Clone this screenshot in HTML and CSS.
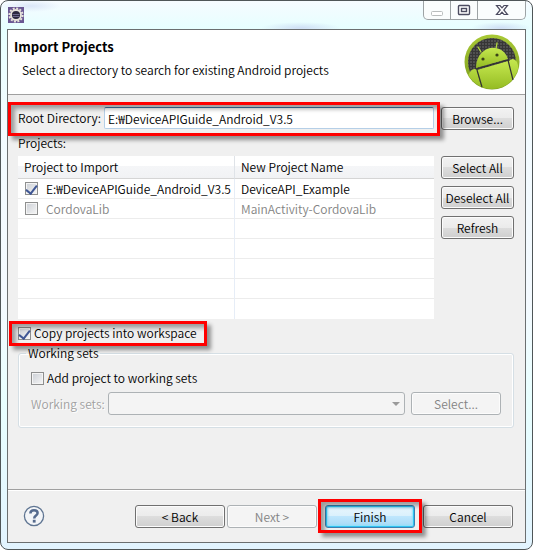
FILE: index.html
```html
<!DOCTYPE html>
<html lang="en">
<head>
    <meta charset="UTF-8">
    <meta name="viewport" content="width=device-width, initial-scale=1.0">
    <title>Import Projects</title>
    <link rel="stylesheet" href="styles.css">
</head>
<body>
    <div class="window">
        <div class="titlebar">
            <svg class="app-icon" viewBox="0 0 16 16" width="16" height="16">
                <rect width="16" height="16" fill="#6a5793"/>
                <circle cx="8" cy="8" r="6.6" fill="none" stroke="#e8e4dc" stroke-width="2" stroke-dasharray="2 1.45"/>
                <circle cx="8" cy="8" r="5" fill="#2c2840" stroke="#e8e4dc" stroke-width="1.8"/>
                <path d="M4.5 7.5h7M4.5 9.5h7" stroke="#6d688c" stroke-width="1"/>
            </svg>
            <div class="controls">
                <button class="control" aria-label="Minimize">
                    <svg viewBox="0 0 14 12" width="14" height="12"><rect x="1.5" y="7.5" width="11" height="4" rx="1" fill="#fff" stroke="#b9bdbd"/></svg>
                </button>
                <button class="control" aria-label="Maximize">
                    <svg viewBox="0 0 14 12" width="14" height="12">
                        <rect x="1.5" y="1.5" width="11" height="9" rx="1" fill="#fff" stroke="#4c4c60" stroke-width="1.4"/>
                        <rect x="4.5" y="4.5" width="5" height="3" fill="#fff" stroke="#4c4c60" stroke-width="1.4"/>
                    </svg>
                </button>
                <button class="control close" aria-label="Close">
                    <svg viewBox="0 0 14 12" width="14" height="12"><path d="M1.5 1.5h3.5l2 2.3 2-2.3h3.5l-3.7 4.5 3.7 4.5h-3.5l-2-2.3-2 2.3H1.5l3.7-4.5z" fill="#fff" stroke="#4c4c60" stroke-width="1.2"/></svg>
                </button>
            </div>
        </div>

        <form class="dialog">
            <div class="header">
                <div>
                    <h1>Import Projects</h1>
                    <p>Select a directory to search for existing Android projects</p>
                </div>
                <svg class="logo" viewBox="0 0 56 56" width="56" height="56">
                    <defs>
                        <linearGradient id="ring" x1="0" y1="0" x2="0" y2="1">
                            <stop offset="0" stop-color="#a9c936"/>
                            <stop offset="1" stop-color="#7a9c1c"/>
                        </linearGradient>
                        <linearGradient id="robot" x1="0" y1="0" x2="0" y2="1">
                            <stop offset="0" stop-color="#c5e84f"/>
                            <stop offset="1" stop-color="#94bb22"/>
                        </linearGradient>
                        <pattern id="mesh" width="3" height="3" patternUnits="userSpaceOnUse">
                            <rect width="3" height="3" fill="#363636"/>
                            <rect width="2" height="2" fill="#505050"/>
                        </pattern>
                        <clipPath id="disc"><circle cx="28" cy="28" r="27"/></clipPath>
                    </defs>
                    <circle cx="28" cy="28" r="27.5" fill="url(#ring)"/>
                    <circle cx="28" cy="28" r="24" fill="url(#mesh)"/>
                    <g clip-path="url(#disc)">
                        <path d="M6 38Q9 33 13 36L18 56H12Q5 50 3 43zM44 28Q49 22 53 28L56 38 49 47z" fill="url(#robot)"/>
                        <path d="M12 34C12 11 38 7 44 25z" fill="url(#robot)"/>
                        <path d="M13 36L44 27 50 48Q40 59 18 54z" fill="url(#robot)"/>
                    </g>
                    <path d="M17 18L14 13M32 15L33 9" stroke="#b5da40" stroke-width="1.3" stroke-linecap="round"/>
                    <path d="M12 35L44 26M13 36L18 53M44 26L49 46" stroke="#333" stroke-width="1.2" fill="none"/>
                    <circle cx="19" cy="25" r="1.6" fill="#3a4316"/>
                    <circle cx="33" cy="21" r="1.6" fill="#3a4316"/>
                </svg>
            </div>

            <div class="content">
                <div class="columns root-row">
                    <div class="root-field marked">
                        <label for="root">Root Directory:</label>
                        <input type="text" id="root" value="E:₩DeviceAPIGuide_Android_V3.5">
                    </div>
                    <button type="button" class="btn">Browse...</button>
                </div>

                <div class="caption">Projects:</div>
                <div class="columns">
                    <table>
                        <thead>
                            <tr><th>Project to Import</th><th>New Project Name</th></tr>
                        </thead>
                        <tbody>
                            <tr>
                                <td><label class="check"><input type="checkbox" checked>E:₩DeviceAPIGuide_Android_V3.5</label></td>
                                <td>DeviceAPI_Example</td>
                            </tr>
                            <tr class="muted">
                                <td><label class="check"><input type="checkbox">CordovaLib</label></td>
                                <td>MainActivity-CordovaLib</td>
                            </tr>
                            <tr><td></td><td></td></tr>
                            <tr><td></td><td></td></tr>
                            <tr><td></td><td></td></tr>
                            <tr><td></td><td></td></tr>
                            <tr><td></td><td></td></tr>
                        </tbody>
                    </table>
                    <div class="side-buttons">
                        <button type="button" class="btn">Select All</button>
                        <button type="button" class="btn">Deselect All</button>
                        <button type="button" class="btn">Refresh</button>
                    </div>
                </div>

                <div class="copy-row marked">
                    <label class="check"><input type="checkbox" checked>Copy projects into workspace</label>
                </div>

                <fieldset>
                    <legend>Working sets</legend>
                    <label class="check"><input type="checkbox">Add project to working sets</label>
                    <div class="sets-row">
                        <label for="sets">Working sets:</label>
                        <div class="select-box">
                            <select id="sets" disabled></select>
                        </div>
                        <button type="button" class="btn wide" disabled>Select...</button>
                    </div>
                </fieldset>
            </div>

            <div class="footer">
                <button type="button" class="help" aria-label="Help">
                    <svg viewBox="0 0 22 22" width="22" height="22">
                        <circle cx="11" cy="11" r="9.6" fill="#f3f5f8" stroke="#5f7592" stroke-width="1.3"/>
                        <path d="M7.4 8.6Q7.4 5.2 11 5.2T14.6 8.1C14.6 10.6 11.2 10.4 11.2 13.4" fill="none" stroke="#566b8e" stroke-width="2.5"/>
                        <rect x="9.8" y="14.8" width="2.8" height="2.8" fill="#566b8e"/>
                    </svg>
                </button>
                <div class="nav">
                    <button type="button" class="btn wide">&lt; Back</button>
                    <button type="button" class="btn wide" disabled>Next &gt;</button>
                </div>
                <div class="finish marked">
                    <button type="submit" class="btn wide primary">Finish</button>
                </div>
                <button type="button" class="btn wide">Cancel</button>
            </div>
        </form>
    </div>
</body>
</html>
```
FILE: styles.css
```css
* {
    box-sizing: border-box;
}
body {
    margin: 0;
    background-color: #fff;
    color: #000;
    font-family: "Noto Sans CJK KR", "Noto Sans", sans-serif;
    font-size: 12px;
    font-weight: 350;
    line-height: 16px;
}
button, input, select {
    font: inherit;
    color: inherit;
    margin: 0;
}
.window {
    display: flex;
    flex-direction: column;
    min-height: 100vh;
    padding: 0 6px 6px;
    border: 1px solid #4f5658;
    border-radius: 8px;
    background:
        radial-gradient(ellipse 30px 6px at 30px 5px, #dbe6f8, transparent),
        radial-gradient(ellipse 40px 6px at 300px 27px, #cfdff5, transparent),
        radial-gradient(ellipse 30px 6px at 500px 27px, #cfdff5, transparent),
        linear-gradient(#f6fbff, #e6ffff 28px, #f2fbff 120px, #f4faff 300px, #e8ffff 400px, #e2f4ff);
}
.titlebar {
    display: flex;
    justify-content: space-between;
    align-items: flex-start;
    height: 28px;
}
.app-icon {
    margin: 6px 0 0 1px;
}
.controls {
    display: flex;
    border: 1px solid #9da3a5;
    border-top: none;
    border-radius: 0 0 5px 5px;
    background-color: #fafdfd;
    overflow: hidden;
}
.control {
    display: flex;
    align-items: center;
    justify-content: center;
    width: 27px;
    height: 18px;
    padding: 0;
    border: none;
    border-right: 1px solid #9da3a5;
    background: none;
}
.control.close {
    width: 47px;
    border-right: none;
}
.dialog {
    display: flex;
    flex-direction: column;
    flex: 1;
    border: 1px solid #6b6f70;
    background-color: #f0f0f0;
}
.header {
    display: flex;
    justify-content: space-between;
    height: 65px;
    padding: 4px 5px 0 6px;
    border-bottom: 1px solid #a0a0a0;
    background-color: #fff;
}
.header h1 {
    margin: 5px 0 7px;
    font-size: 13px;
    line-height: 16px;
}
.header p {
    margin: 0 0 0 8px;
}
.content {
    flex: 1;
    padding: 12px 11px 0 10px;
}
.columns {
    display: grid;
    grid-template-columns: 1fr 73px;
    gap: 7px;
    align-items: start;
}
.root-field {
    display: flex;
    align-items: center;
    height: 22px;
}
.root-field label {
    width: 86px;
    white-space: nowrap;
}
.root-field input {
    flex: 1;
    min-width: 0;
    height: 22px;
    padding: 0 3px;
    border: 1px solid #b5cfe7;
    border-top-color: #3d7bad;
    border-radius: 2px;
    background-color: #fff;
    outline: none;
}

/* red callout frames */
.marked {
    position: relative;
}
.marked::after {
    content: "";
    position: absolute;
    z-index: 1;
    inset: -5px -6px -7px -10px;
    border: 3px solid #f00;
    box-shadow: 4px 4px 4px rgba(0, 0, 0, 0.4), inset 4px 4px 4px rgba(0, 0, 0, 0.35);
    pointer-events: none;
}
.copy-row.marked::after {
    inset: -4px -10px -5px -9px;
}
.finish.marked::after {
    inset: -6px -7px -5px;
}

.btn {
    height: 23px;
    padding: 0;
    border: 1px solid #707070;
    border-radius: 3px;
    background: linear-gradient(#f2f2f2, #ebebeb 50%, #dddddd 50%, #cfcfcf);
    box-shadow: inset 0 0 0 1px #fcfcfc;
    line-height: 18px;
    white-space: nowrap;
}
.btn.wide {
    width: 90px;
}
.btn.primary {
    border-color: #3c7fb1;
    background: linear-gradient(#eaf6fd, #d9f0fc 50%, #bee6fd 50%, #a7d9f5);
    box-shadow: inset 0 0 0 1px #2fc4f2, inset 0 0 2px 2px #8fe0fa;
}
.btn:disabled {
    border-color: #adb2b5;
    background: #f4f4f4;
    color: #838383;
}
.caption {
    margin: 5px 0 5px;
}
table {
    width: 100%;
    table-layout: fixed;
    border-collapse: separate;
    border-spacing: 0;
    background-color: #fff;
}
th {
    height: 23px;
    padding: 0 6px;
    border-bottom: 1px solid #d5d5d5;
    border-right: 1px solid #dfe3e8;
    background: linear-gradient(#fff 45%, #f5f6f8 45%, #f1f2f4);
    font-weight: inherit;
    text-align: left;
}
th:first-child {
    width: 217px;
}
td {
    height: 20px;
    padding: 0 6px;
    border-bottom: 1px solid #ececec;
    border-right: 1px solid #e6edf7;
    white-space: nowrap;
}
th:last-child, td:last-child {
    border-right: none;
}
tr:last-child td {
    border-bottom: none;
}
.muted {
    color: #838383;
}
.check {
    display: flex;
    align-items: center;
    gap: 3px;
    width: max-content;
}
td .check {
    gap: 8px;
    padding-left: 1px;
}
input[type="checkbox"] {
    display: grid;
    place-items: center;
    appearance: none;
    width: 13px;
    height: 13px;
    border: 1px solid #8e8f8f;
    background: linear-gradient(135deg, #cbcfd5, #f6f6f6);
    box-shadow: inset 0 0 0 1px #f4f4f4;
}
input[type="checkbox"]:checked::before {
    content: "";
    width: 5px;
    height: 9px;
    margin-bottom: 2px;
    border: solid #3f5694;
    border-width: 0 2px 2px 0;
    transform: rotate(38deg);
}
.side-buttons {
    display: grid;
    gap: 7px;
}
.copy-row {
    width: max-content;
    margin-top: 6px;
}
fieldset {
    min-width: 0;
    margin: 4px 0 0;
    padding: 9px 12px 12px;
    border: 1px solid #d5dfe5;
    border-radius: 3px;
    box-shadow: inset 0 0 0 1px #fff;
}
legend {
    margin-left: -5px;
    padding: 0 2px;
}
.sets-row {
    display: flex;
    align-items: center;
    gap: 6px;
    margin-top: 6px;
}
.sets-row label {
    width: 71px;
    color: #a0a0a0;
    text-shadow: 1px 1px 0 #fff;
    white-space: nowrap;
}
.select-box {
    position: relative;
    display: flex;
    flex: 1;
}
.select-box::after {
    content: "";
    position: absolute;
    right: 5px;
    top: 10px;
    border: 4px solid transparent;
    border-top-color: #9a9a9a;
    border-bottom: none;
}
.select-box select {
    appearance: none;
    width: 100%;
    height: 23px;
    border: 1px solid #adb2b5;
    border-radius: 3px;
    background-color: #f4f4f4;
    opacity: 1;
}
.footer {
    display: flex;
    align-items: flex-start;
    gap: 8px;
    padding: 15px 12px 14px 15px;
    border-top: 1px solid #a0a0a0;
    box-shadow: inset 0 1px 0 #fff;
}
.help {
    display: flex;
    margin-right: auto;
    padding: 0;
    border: none;
    background: none;
}
.nav {
    display: flex;
    gap: 2px;
}
.finish {
    display: flex;
}
```
